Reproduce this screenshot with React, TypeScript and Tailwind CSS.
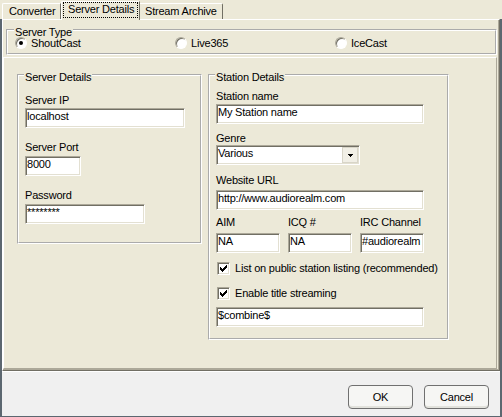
import type { ReactNode } from 'react'

const sunken =
  'bg-white border border-t-[#aca899] border-l-[#aca899] border-b-white border-r-white shadow-[inset_1px_1px_0_#716f64,inset_-1px_-1px_0_#e3e0d2]'

function Edit({ className, value }: { className: string; value: string }) {
  return <div className={`h-[20px] pl-[1px] pt-[1px] overflow-hidden ${sunken} ${className}`}>{value}</div>
}

function Group({ title, className, children }: { title: string; className: string; children: ReactNode }) {
  return (
    <fieldset className={`border-2 border-white [border-style:groove] ${className}`}>
      <legend className="-ml-[1px] px-[1px] h-[14px] leading-[14px]">
        <span className="relative top-[2px]">{title}</span>
      </legend>
      {children}
    </fieldset>
  )
}

function Radio({ label, checked }: { label: string; checked?: boolean }) {
  return (
    <div className="w-[160px] flex items-center">
      <span className="w-[12px] h-[12px] rounded-full bg-white border border-t-[#aca899] border-l-[#aca899] border-b-white border-r-white shadow-[inset_1px_1px_0_#716f64] flex items-center justify-center">
        {checked && <span className="w-[4px] h-[4px] rounded-full bg-black" />}
      </span>
      <span className="ml-[4px]">{label}</span>
    </div>
  )
}

// classic 7x7 check glyph, one column at a time
const tick = [2, 3, 4, 3, 2, 1, 0]

function Check({ label, className }: { label: string; className: string }) {
  return (
    <div className={`h-[13px] flex items-center ${className}`}>
      <span className={`ml-[1px] w-[13px] h-[13px] p-[2px] ${sunken}`}>
        <svg width="7" height="7" viewBox="0 0 7 7" className="block">
          {tick.map((y, x) => (
            <rect key={x} x={x} y={y} width="1" height="3" fill="#000" />
          ))}
        </svg>
      </span>
      <span className="ml-[5px]">{label}</span>
    </div>
  )
}

export default function App() {
  return (
    <div className="w-[502px] h-[417px] flex flex-col bg-[#ece9d8] font-['Liberation_Sans',Arial,sans-serif] text-[11px] leading-[13px] tracking-[-0.2px] text-black whitespace-nowrap select-none">
      {/* tab strip */}
      <div className="h-[19px] shrink-0 flex items-end pl-[2px]">
        <div className="w-[59px] h-[16px] border-t border-l border-white border-r border-r-[#716f64] rounded-tl-[2px] pl-[6px] pt-[1px]">
          Converter
        </div>
        <div className="relative z-10 -mb-[1px] w-[79px] h-[19px] bg-[#ece9d8] border-t border-l border-white border-r border-r-[#716f64] rounded-tl-[2px]">
          <div className="ml-[1px] w-[75px] h-[16px] border border-dotted border-black pl-[4px]">Server Details</div>
        </div>
        <div className="w-[83px] h-[16px] border-t border-white border-r border-r-[#716f64] rounded-tr-[2px] pl-[5px] pt-[1px]">
          Stream Archive
        </div>
      </div>

      <div className="flex-1 flex flex-col border-l-2 border-r-2 border-b border-[#5c6770]">
        {/* tab sheet */}
        <div className="h-[352px] shrink-0 flex flex-col border-t border-l border-white border-r border-b border-r-[#716f64] border-b-[#716f64] shadow-[inset_-1px_-1px_0_#aca899]">
          <Group title="Server Type" className="mt-[3px] ml-[3px] w-[490px] pl-[7px] pb-[4px]">
            <div className="h-[12px] flex items-center">
              <Radio label="ShoutCast" checked />
              <Radio label="Live365" />
              <Radio label="IceCast" />
            </div>
          </Group>

          <div className="flex-1 mt-[2px] mr-[2px] mb-[1px] border-t border-l border-white border-r border-b border-r-[#aca899] border-b-[#aca899] pt-[10px] pl-[13px] flex items-start gap-[6px]">
            <Group title="Server Details" className="w-[185px] pl-[6px] pb-[18px]">
              <div className="mt-[12px]">Server IP</div>
              <Edit className="mt-[1px] w-[160px]" value="localhost" />
              <div className="mt-[13px]">Server Port</div>
              <Edit className="mt-[2px] w-[56px]" value="8000" />
              <div className="mt-[13px]">Password</div>
              <Edit className="mt-[2px] w-[120px]" value="********" />
            </Group>

            <Group title="Station Details" className="w-[241px] pl-[6px] pb-[11px]">
              <div className="mt-[8px]">Station name</div>
              <Edit className="mt-[1px] w-[208px]" value="My Station name" />
              <div className="mt-[8px]">Genre</div>
              <div className={`w-[144px] h-[20px] flex ${sunken}`}>
                <div className="flex-1 pl-[1px] pt-[1px]">Various</div>
                <div className="w-[16px] my-[1px] mr-[1px] bg-[#f1efe6] border border-[#d8d5c8] flex items-center justify-center">
                  <svg width="5" height="3" viewBox="0 0 5 3" className="block">
                    <rect x="0" y="0" width="5" height="1" fill="#000" />
                    <rect x="1" y="1" width="3" height="1" fill="#000" />
                    <rect x="2" y="2" width="1" height="1" fill="#000" />
                  </svg>
                </div>
              </div>
              <div className="mt-[9px]">Website URL</div>
              <Edit className="mt-[3px] w-[208px]" value="http://www.audiorealm.com" />
              <div className="mt-[6px] flex gap-[8px]">
                <div className="w-[64px]">AIM</div>
                <div className="w-[64px]">ICQ #</div>
                <div className="w-[64px]">IRC Channel</div>
              </div>
              <div className="mt-[4px] flex gap-[8px]">
                <Edit className="w-[64px]" value="NA" />
                <Edit className="w-[64px]" value="NA" />
                <Edit className="w-[64px]" value="#audiorealm" />
              </div>
              <Check className="mt-[9px]" label="List on public station listing (recommended)" />
              <Check className="mt-[12px]" label="Enable title streaming" />
              <Edit className="mt-[7px] w-[208px]" value="$combine$" />
            </Group>
          </div>
        </div>

        {/* button bar */}
        <div className="flex-1 bg-[#f0f0f0] border-t border-white flex justify-end items-start pt-[13px] pr-[11px] gap-[11px]">
          <button className="w-[65px] h-[24px] rounded-[4px] border border-[#707070] bg-[#f6f6f4] shadow-[inset_0_-2px_0_#e2e2dc]">
            OK
          </button>
          <button className="w-[65px] h-[24px] rounded-[4px] border border-[#707070] bg-[#f6f6f4] shadow-[inset_0_-2px_0_#e2e2dc]">
            Cancel
          </button>
        </div>
      </div>
    </div>
  )
}
